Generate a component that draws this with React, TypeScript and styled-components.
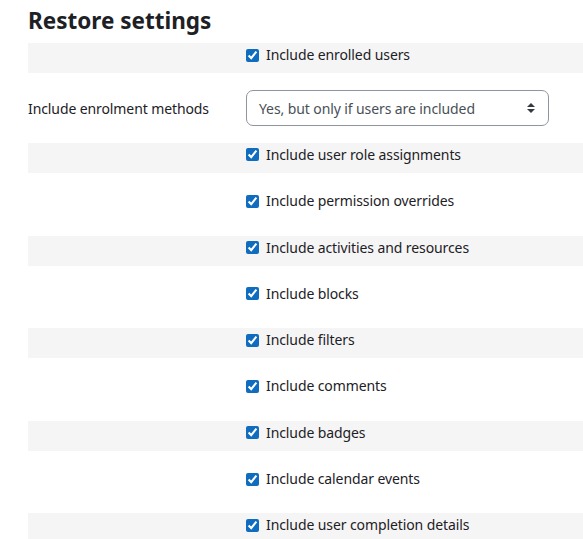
import React from "react";
import styled, { createGlobalStyle } from "styled-components";

const Global = createGlobalStyle`
  html, body { margin: 0; padding: 0; background: #fff; }
  body { font-family: "Noto Sans", "Open Sans", sans-serif; color: #1d2125; overflow: hidden; }
`;

const Page = styled.div`
  padding: 6px 0 0 28px;
`;

const Heading = styled.h2`
  margin: 0 0 7px 0;
  font-size: 22.5px;
  line-height: 30px;
  font-weight: 700;
  color: #1d2125;
`;

const Row = styled.div<{ $striped?: boolean; $tall?: boolean }>`
  display: grid;
  grid-template-columns: 218px 1fr;
  align-items: ${(p) => (p.$tall ? "center" : "start")};
  height: ${(p) => (p.$tall ? "37.7px" : "30.3px")};
  margin-bottom: 16px;
  background: ${(p) => (p.$striped ? "#f5f5f5" : "transparent")};
`;

const Label = styled.label`
  font-size: 14px;
  letter-spacing: -0.1px;
  line-height: 22px;
  padding-top: 1px;
`;

const Check = styled.label`
  grid-column: 2;
  display: flex;
  align-items: center;
  gap: 7px;
  font-size: 14px;
  letter-spacing: -0.1px;
  line-height: 22px;
  padding-top: 1px;
`;

const Box = styled.input`
  width: 13px;
  height: 13px;
  margin: 0;
  accent-color: #0f6cbf;
`;

const Select = styled.div`
  position: relative;
  width: 303px;
  height: 36px;
  box-sizing: border-box;
  border: 1px solid #8f959e;
  border-radius: 7px;
  display: flex;
  align-items: center;
  padding: 0 12px;
  font-size: 14px;
  letter-spacing: -0.1px;
  color: #495057;
`;

const Arrow = styled.svg`
  position: absolute;
  right: 12px;
  top: 50%;
  transform: translateY(-50%);
`;

const items = [
  "Include user role assignments",
  "Include permission overrides",
  "Include activities and resources",
  "Include blocks",
  "Include filters",
  "Include comments",
  "Include badges",
  "Include calendar events",
  "Include user completion details",
];

export default function App() {
  return (
    <Page>
      <Global />
      <Heading>Restore settings</Heading>
      <Row $striped>
        <Check>
          <Box type="checkbox" defaultChecked />
          Include enrolled users
        </Check>
      </Row>
      <Row $tall>
        <Label>Include enrolment methods</Label>
        <Select>
          Yes, but only if users are included
          <Arrow width="10" height="12" viewBox="0 0 10 12">
            <path d="M5 1 L9 5 H1 Z" fill="#343a40" />
            <path d="M5 11 L9 7 H1 Z" fill="#343a40" />
          </Arrow>
        </Select>
      </Row>
      {items.map((t, i) => (
        <Row key={t} $striped={i % 2 === 0}>
          <Check>
            <Box type="checkbox" defaultChecked />
            {t}
          </Check>
        </Row>
      ))}
    </Page>
  );
}
